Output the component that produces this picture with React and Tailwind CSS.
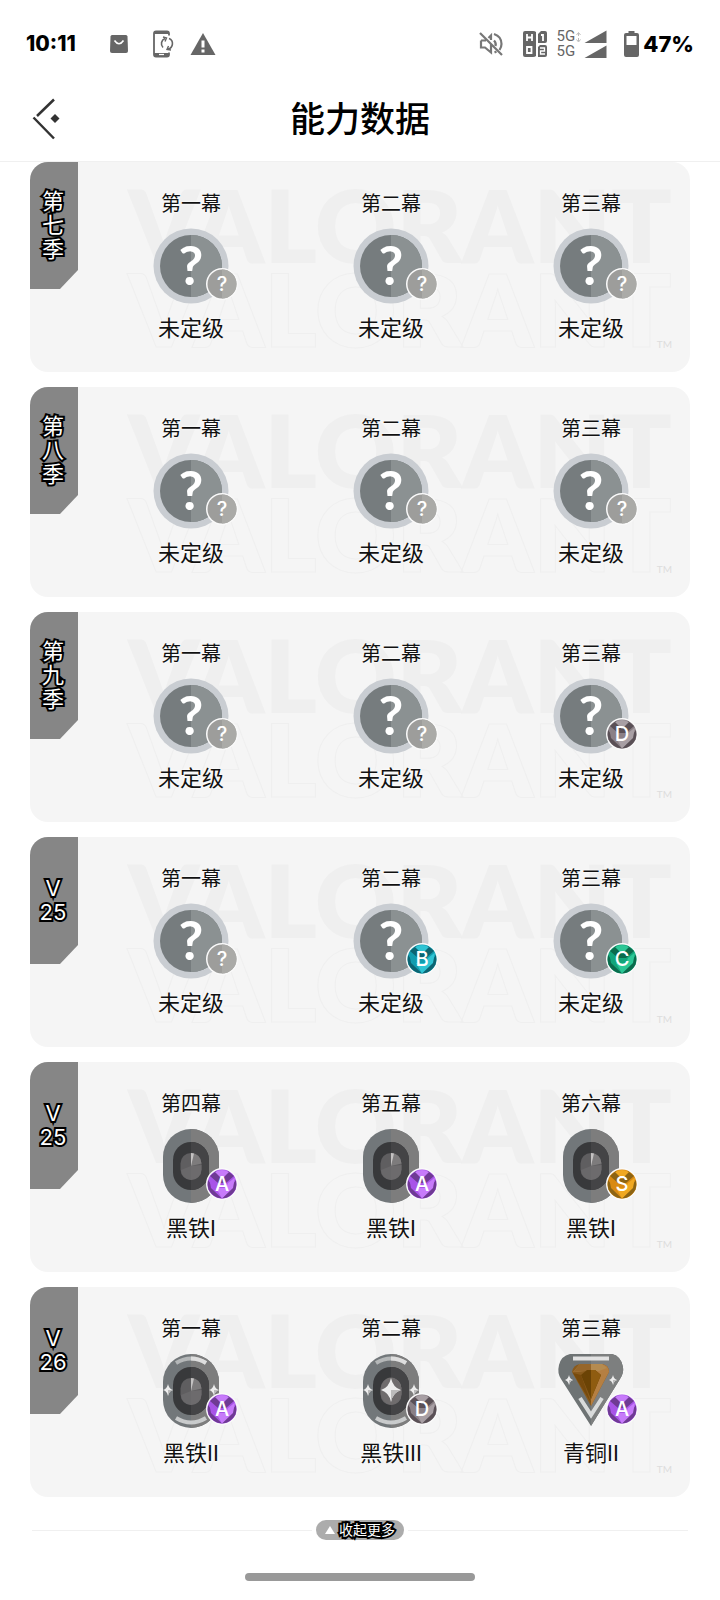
const seasons = [
  { id: "s7", name: ["第", "七", "季"], acts: [["第一幕", "none", "?", "未定级"], ["第二幕", "none", "?", "未定级"], ["第三幕", "none", "?", "未定级"]] },
  { id: "s8", name: ["第", "八", "季"], acts: [["第一幕", "none", "?", "未定级"], ["第二幕", "none", "?", "未定级"], ["第三幕", "none", "?", "未定级"]] },
  { id: "s9", name: ["第", "九", "季"], acts: [["第一幕", "none", "?", "未定级"], ["第二幕", "none", "?", "未定级"], ["第三幕", "none", "D", "未定级"]] },
  { id: "v25a", name: ["V", "25"], acts: [["第一幕", "none", "?", "未定级"], ["第二幕", "none", "B", "未定级"], ["第三幕", "none", "C", "未定级"]] },
  { id: "v25b", name: ["V", "25"], acts: [["第四幕", "iron1", "A", "黑铁I"], ["第五幕", "iron1", "A", "黑铁I"], ["第六幕", "iron1", "S", "黑铁I"]] },
  { id: "v26", name: ["V", "26"], acts: [["第一幕", "iron2", "A", "黑铁II"], ["第二幕", "iron3", "D", "黑铁III"], ["第三幕", "bronze2", "A", "青铜II"]] },
];

const badgeColors = {
  "?": { base: "#9d9d9b", light: "#aaaaa7", dark: "#939391" },
  A: { base: "#a855e8", light: "#c77bfa", dark: "#6f3a94" },
  B: { base: "#129cae", light: "#2fc4d4", dark: "#0c6472" },
  C: { base: "#12a57a", light: "#2cc796", dark: "#0b6b4c" },
  D: { base: "#8a8086", light: "#a89fa4", dark: "#5a5056" },
  S: { base: "#d98a12", light: "#f0a821", dark: "#8d6413" },
};

function Badge({ grade }) {
  const c = badgeColors[grade];
  return (
    <svg viewBox="0 0 32 32" className="absolute left-[53px] top-10 size-8" aria-hidden="true">
      <circle cx="16" cy="16" r="16" fill="#fafafa" />
      <circle cx="16" cy="16" r="14.5" fill={c.base} />
      {grade === "?" ? (
        <path d="M16 1.5a14.5 14.5 0 0 1 0 29z" fill={c.light} />
      ) : (
        <>
          <path d="M4 8 10 3 16 8 22 3 28 8 20 15H12z" fill={c.dark} />
          <path d="M9 4Q16 0 23 4L16 11z" fill={c.light} />
          <path d="M2 12 16 30.5Q7 30 2.5 21.500Q1 17 2 12z" fill={c.dark} />
          <path d="M30 12 16 30.500Q25 30 29.500 21.500Q31 17 30 12z" fill={c.dark} />
          <path d="M3 9.500 10 15 16 30.500 5 20z" fill={c.base} />
          <path d="M29 9.500 22 15 16 30.500 27 20z" fill={c.light} />
          <path d="M10 20H22L16 30.500z" fill={c.light} />
        </>
      )}
      <text x="16" y="23" textAnchor="middle" fill="#fff" className="font-['Inter',sans-serif] text-[20px] font-medium">
        {grade}
      </text>
    </svg>
  );
}

function Sparkle({ x, y, w, h }) {
  return (
    <g>
      <path d={`M${x} ${y - h}Q${x + w * 0.2} ${y - h * 0.2} ${x + w} ${y}Q${x + w * 0.2} ${y + h * 0.2} ${x} ${y + h}Q${x - w * 0.2} ${y + h * 0.2} ${x - w} ${y}Q${x - w * 0.2} ${y - h * 0.2} ${x} ${y - h}z`} fill="#ededed" />
      <path d={`M${x} ${y}L${x + w} ${y}Q${x + w * 0.2} ${y + h * 0.2} ${x} ${y + h}z`} fill="#bcbcbc" />
    </g>
  );
}

function Unranked() {
  return (
    <>
      <circle cx="38" cy="38" r="37.500" fill="#c9cdd2" />
      <circle cx="38" cy="38" r="31" fill="#767c7e" />
      <path d="M38 7a31 31 0 0 1 0 62z" fill="#8b9192" />
      <text x="38" y="57" textAnchor="middle" fill="#fff" className="font-['Lato',sans-serif] text-[54px] font-bold">
        ?
      </text>
    </>
  );
}

function Iron({ level }) {
  return (
    <>
      <rect x="10" y="1" width="56" height="74" rx="28" fill="#72777a" />
      <path d="M38 1a28 28 0 0 1 28 28v18a28 28 0 0 1-28 28z" fill="#7d7d7d" />
      <rect x="20" y="14" width="36" height="48" rx="18" fill="#38393b" />
      <path d="M38 14a18 18 0 0 1 18 18v12a18 18 0 0 1-18 18z" fill="#444446" />
      <rect x="27.500" y="25" width="21" height="27" rx="10.500" fill="#5f5e60" />
      <path d="M38 25a10.500 10.500 0 0 1 10.500 10.500L38 38z" fill="#7d7b7c" />
      <path d="M38 25l3 .5L38 38z" fill="#c4c2c2" />
      <path d="M38 38l10.500-1v4.500A10.500 10.500 0 0 1 38 52z" fill="#6d6b6d" />
      <path d="M38 38 28 42a10.500 10.500 0 0 0 10 10z" fill="#69686a" />
      {level > 1 && (
        <>
          <path d="M23 10Q38 1 53 10" fill="none" stroke="#b4b7b8" strokeWidth="4" />
          <path d="M38 5.500Q46 5.500 53 10" fill="none" stroke="#dedede" strokeWidth="4" />
          <path d="M23 65Q38 74 53 65" fill="none" stroke="#c9cbcc" strokeWidth="4" />
          <Sparkle x={15} y={37} w={5} h={6} />
          <Sparkle x={61} y={37} w={5} h={6} />
        </>
      )}
      {level > 2 && (
        <>
          <ellipse cx="38" cy="38" rx="10.5" ry="13.5" fill="#6f6c6d" />
          <Sparkle x={38} y={37} w={10} h={12} />
        </>
      )}
    </>
  );
}

function Bronze() {
  return (
    <>
      <path d="M17 1H59Q68 3 70 14Q71 20 67 26L38 73 8 26Q4 20 6 12Q8 3 17 1z" fill="#6e7374" />
      <path d="M38 1H59Q68 3 70 14Q71 20 67 26L38 73z" fill="#7d7f7f" />
      <path d="M20 5.500H56" stroke="#e2e2e2" strokeWidth="4" />
      <path d="M19 19Q20 12 27 11H49Q56 12 56 19L38 53z" fill="#895a1c" />
      <path d="M38 11H49Q56 12 56 19L38 53z" fill="#b57f42" />
      <path d="M27 11H49L54 15 46 18H32L20 19z" fill="#b58b50" />
      <path d="M27 11H38V18H30L20 19z" fill="#96662a" />
      <path d="M28 22 34 17H42L48 22 38 46z" fill="#6b4305" />
      <path d="M38 17H42L48 22 38 46z" fill="#8f5c10" />
      <path d="M20 20 28 22 38 50z" fill="#774a0c" />
      <path d="M27 45 38 62 49 45" fill="none" stroke="#d9dbdb" strokeWidth="4" />
      <Sparkle x={16} y={27} w={4} h={5} />
      <Sparkle x={60} y={27} w={4} h={5} />
    </>
  );
}

function Rank({ kind }) {
  return (
    <svg viewBox="0 0 76 76" className="size-[76px]" aria-hidden="true">
      {kind === "none" && <Unranked />}
      {kind === "iron1" && <Iron level={1} />}
      {kind === "iron2" && <Iron level={2} />}
      {kind === "iron3" && <Iron level={3} />}
      {kind === "bronze2" && <Bronze />}
    </svg>
  );
}

function Watermark() {
  return (
    <div aria-hidden="true" className="pointer-events-none absolute inset-y-0 right-[18px] flex select-none flex-col items-end pt-5 font-['Lato',sans-serif] text-[100px] font-extrabold leading-[84px]">
      <span className="text-[#efefef]">VALORANT</span>
      <span className="text-transparent [-webkit-text-stroke:1px_#efefef]">VALORANT</span>
      <span className="absolute bottom-5 right-0 text-[10px] font-normal leading-4 text-[#dddddd]">TM</span>
    </div>
  );
}

function Season({ season }) {
  return (
    <section className="relative flex h-[210px] overflow-hidden rounded-[18px] bg-[#f5f5f5]">
      <Watermark />
      <h2 className="relative flex h-[127px] w-12 shrink-0 flex-col items-center justify-center bg-[#868686] pb-0.5 pr-0.5 text-[22px] font-normal leading-6 text-white [-webkit-text-stroke:4px_#000] [clip-path:polygon(0_0,100%_0,100%_108px,30px_100%,0_100%)] [paint-order:stroke_fill]">
        {season.name.map((part) => (
          <span key={part}>{part}</span>
        ))}
      </h2>
      <ul className="relative -mr-px ml-[13px] grid flex-1 grid-cols-3 pt-[27px]">
        {season.acts.map(([act, kind, grade, rank]) => (
          <li key={act} className="flex flex-col items-center">
            <h3 className="text-xl leading-[30px] [text-shadow:0_0_2px_#fff,0_0_3px_#fff]">{act}</h3>
            <div className="relative mt-[9px]">
              <Rank kind={kind} />
              <Badge grade={grade} />
            </div>
            <p className="mt-2 text-[22px] leading-8 [text-shadow:0_0_2px_#fff,0_0_3px_#fff]">{rank}</p>
          </li>
        ))}
      </ul>
    </section>
  );
}

function StatusBar() {
  return (
    <div className="flex h-[76px] items-center justify-between px-[26px] pt-3 font-['Inter',sans-serif]">
      <div className="flex items-center">
        <span className="text-[21px] font-extrabold leading-7">10:11</span>
        <svg viewBox="0 0 20 20" className="ml-[33px] size-5" fill="#666" aria-hidden="true">
          <path d="M3 1H17Q18.300 1 18.500 2.500L19 17Q19 19 17 19H3Q1 19 1 17L1.500 2.500Q1.700 1 3 1z" />
          <path d="M5.500 6.500Q10 13 14.500 6.500" fill="none" stroke="#fff" strokeWidth="1.600" />
        </svg>
        <svg viewBox="0 0 22 28" className="ml-[23px] h-7 w-[22px]" fill="none" stroke="#666" aria-hidden="true">
          <path d="M17 5.500V3.500Q17 1.500 15 1.500H4Q2 1.500 2 3.500V24.500Q2 26.500 4 26.500H15Q17 26.500 17 24.500V22.500" strokeWidth="1.800" />
          <path d="M2 2.500H17M2 24.500H17" strokeWidth="3" />
          <path d="M7 24.500H12" stroke="#fff" strokeWidth="1.200" />
          <path d="M11 17.500A5.500 5.500 0 0 1 13 8.500M17 8.500A5.500 5.500 0 0 1 16 19" strokeWidth="1.600" />
          <path d="M11 7 14.500 8 13 11.500M19 20 15 19.500 16.500 16" strokeWidth="1.400" />
        </svg>
        <svg viewBox="0 0 26 24" className="ml-4 h-6 w-[26px]" fill="#666" aria-hidden="true">
          <path d="M13 1 25.500 23H.5z" />
          <path d="M13 8.500V15.500M13 17.500V20.500" stroke="#fff" strokeWidth="3" />
        </svg>
      </div>
      <div className="flex items-center">
        <svg viewBox="0 0 24 24" className="size-6" fill="none" stroke="#777" strokeWidth="2.200" aria-hidden="true">
          <path d="M1 1 23 23M2 8.500V15.500H6L12 20.500V12M2 8.500H7M9.500 6 12 3.500V8" />
          <path d="M15 8.500Q17.500 11 16.500 14M15 2Q22.500 4.500 22.500 12Q22.500 15 20.500 18M15.500 20.500 17.500 19.500" />
        </svg>
        <svg viewBox="0 0 24 26" className="ml-5 h-[26px] w-6" fill="#666" aria-hidden="true">
          <path d="M2 0H10Q12 0 13 1V25Q12 26 10 26H2Q0 26 0 24V2Q0 0 2 0zM18 0H22Q24 0 24 2V10Q24 12 22 12H15V3zM17 14H22Q24 14 24 16V24Q24 26 22 26H15V16z" />
          <g fill="none" stroke="#fff" strokeWidth="1.800">
            <path d="M4 3V10M9 3V10M4 6.500H9M4 16H8.500V22H4zM18 4H20V10" />
            <path d="M17 17H21.500V20H17.500V23H22" strokeWidth="1.300" />
          </g>
        </svg>
        <div className="ml-2.5 flex flex-col font-['Roboto',sans-serif] text-[15px] leading-[15px] text-[#666]">
          <span>5G</span>
          <span>5G</span>
        </div>
        <svg viewBox="0 0 32 28" className="h-7 w-8" fill="#666" aria-hidden="true">
          <path d="M9.500 13 31.500 .5V13zM9.500 28 31.500 15.500V28z" />
          <path d="M1.500 5 3.500 2.500 5.500 5M3.500 3V6M3.500 8V11M1.500 9.500 3.500 12 5.500 9.500" fill="none" stroke="#bbb" />
        </svg>
        <svg viewBox="0 0 15 26" className="ml-[17px] h-[26px] w-[15px]" aria-hidden="true">
          <path d="M4.500 0H10.500V2H13Q15 2 15 4V24Q15 26 13 26H2Q0 26 0 24V4Q0 2 2 2H4.500z" fill="#666" />
          <path d="M2.500 5H12.500V14H2.500z" fill="#fff" />
        </svg>
        <span className="ml-1 text-[22px] font-extrabold leading-7">47%</span>
      </div>
    </div>
  );
}

export default function App() {
  return (
    <div className="min-h-screen bg-white font-['Inter','Noto_Sans_CJK_SC',sans-serif] text-[#111]">
      <header className="border-b border-[#f0f0f0] text-black">
        <StatusBar />
        <div className="grid h-[85px] grid-cols-[1fr_auto_1fr] items-center px-8">
          <button type="button" aria-label="返回" className="justify-self-start">
            <svg viewBox="0 0 28 42" className="h-[42px] w-7" fill="none" stroke="#333" strokeWidth="2.500" aria-hidden="true">
              <path d="M22 1.500 5 18M1.500 19.500 22 40.500" />
              <path d="M23 16 27.500 20.500 23 25 18.500 20.500z" fill="#333" stroke="none" />
            </svg>
          </button>
          <h1 className="text-[35px] font-medium leading-[50px]">能力数据</h1>
        </div>
      </header>
      <main className="flex flex-col gap-[15px] px-[30px]">
        {seasons.map((season) => (
          <Season key={season.id} season={season} />
        ))}
      </main>
      <footer className="flex flex-col items-center px-8 pb-[19px] pt-[23px]">
        <div className="flex w-full items-center gap-1">
          <div className="h-px flex-1 bg-[#f0f0f0]" />
          <button type="button" className="flex h-5 items-center gap-1 rounded-full bg-[#acacac] px-[9px] text-sm leading-5 text-white">
            <svg viewBox="0 0 10 8" className="h-2 w-2.5" fill="#fff" aria-hidden="true">
              <path d="M5 0 10 8H0z" />
            </svg>
            <span className="[-webkit-text-stroke:4px_#000] [paint-order:stroke_fill]">收起更多</span>
          </button>
          <div className="h-px flex-1 bg-[#f0f0f0]" />
        </div>
        <div className="mt-[33px] h-2 w-[230px] rounded-full bg-[#999]" />
      </footer>
    </div>
  );
}
